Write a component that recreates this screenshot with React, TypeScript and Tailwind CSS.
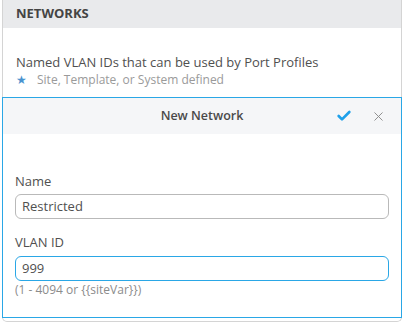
import { Check, X } from "lucide-react";

export default function App() {
  return (
    <div className="h-[324px] w-[405px] overflow-hidden bg-white text-[#505050]" style={{ fontFamily: '"Open Sans", "Liberation Sans", sans-serif' }}>
      <div className="ml-[2px] w-[400px] rounded-b-[5px] border-x border-b border-[#d4d4d4] pb-[3px]">
        {/* Section header */}
        <div className="flex h-[28px] items-center bg-[#e9eaec] px-[13px] text-[13px] font-bold text-[#444]">
          NETWORKS
        </div>

        {/* Description */}
        <div className="px-[13px] pt-[25px] pb-[8px]">
          <p className="text-[13px] leading-[18px] text-[#505050]">
            Named VLAN IDs that can be used by Port Profiles
          </p>
          <p className="flex items-center gap-[10px] text-[12px] leading-[18px] text-[#9a9a9a]">
            <span className="text-[12px] text-[#4a93cf]">★</span>
            Site, Template, or System defined
          </p>
        </div>

        {/* New network card */}
        <div className="-mx-px border border-[#2aa7e6]">
          <div className="relative flex h-[36px] items-center justify-center bg-[#f5f6f8]">
            <span className="text-[12.5px] font-semibold text-[#4a4a4a]">New Network</span>
            <div className="absolute right-[15px] top-0 flex h-full items-center gap-[19px]">
              <Check className="h-[16px] w-[16px] text-[#1ea0ea]" strokeWidth={4} />
              <X className="h-[15px] w-[15px] text-[#8a8a8a]" strokeWidth={1.5} />
            </div>
          </div>

          <div className="px-3 pt-[38px] pb-[19px]">
            <label className="block text-[13px] leading-[18px] text-[#505050]">Name</label>
            <div className="mt-[4px] flex h-[25px] items-center rounded-[6px] border border-[#b9b9b9] px-[6px] text-[13px] text-[#505050]">
              Restricted
            </div>

            <label className="mt-[14px] block text-[13px] leading-[18px] text-[#505050]">VLAN ID</label>
            <div className="mt-[5px] flex h-[25px] items-center rounded-[6px] border border-[#2aa7e6] px-[6px] text-[13px] text-[#505050]">
              999
            </div>
            <p className="mt-px text-[12px] leading-[16px] text-[#8c8c8c]">(1 - 4094 or {"{{siteVar}}"})</p>
          </div>
        </div>
      </div>
    </div>
  );
}
